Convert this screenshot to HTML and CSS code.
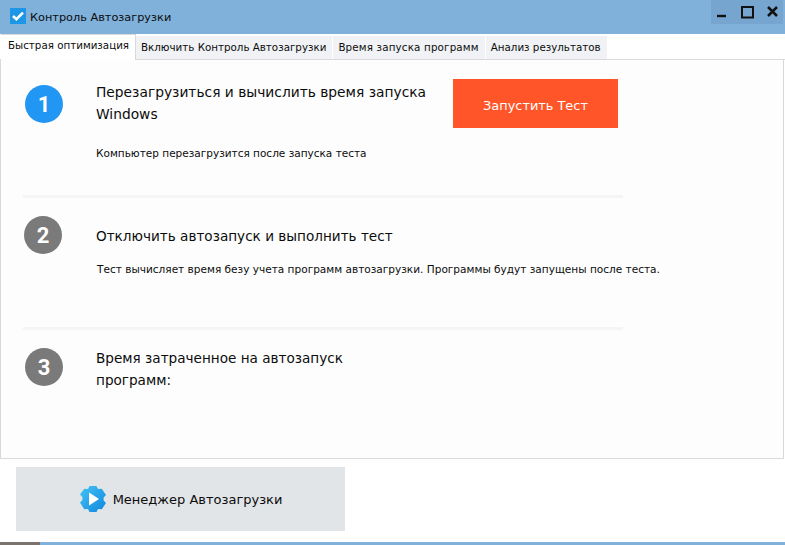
FILE: index.html
```html
<!DOCTYPE html>
<html lang="ru">
<head>
<meta charset="utf-8">
<title>Контроль Автозагрузки</title>
<link rel="stylesheet" href="styles.css">
</head>
<body>
<div class="window">
  <header class="titlebar">
    <svg class="app-icon" width="16" height="16" viewBox="0 0 16 16"><rect width="16" height="16" fill="#1e96e8"/><path d="M3 8l3.400 3.200L13 4.600" fill="none" stroke="#fff" stroke-width="2.600"/></svg>
    <span class="app-title">Контроль Автозагрузки</span>
    <div class="controls">
      <svg width="54" height="24" viewBox="0 0 54 24"><path d="M6 16h9" stroke="#111" stroke-width="2.400"/><rect x="31" y="7" width="11" height="10.500" fill="none" stroke="#111" stroke-width="2"/></svg>
      <svg class="close-icon" width="11" height="11" viewBox="0 0 11 11"><path d="M1 1l9 9M10 1l-9 9" stroke="#111" stroke-width="2.500"/></svg>
    </div>
  </header>
  <nav class="tabs">
    <div class="tab active">Быстрая оптимизация</div>
    <div class="tab">Включить Контроль Автозагрузки</div>
    <div class="tab tab-wide">Время запуска программ</div>
    <div class="tab">Анализ результатов</div>
  </nav>
  <main class="panel">
    <section class="step step-one">
      <div class="badge badge-blue badge-a">1</div>
      <div class="step-body">
        <div class="step-head">
          <h2 class="heading heading-narrow">Перезагрузиться и вычислить время запуска Windows</h2>
          <button class="run">Запустить Тест</button>
        </div>
        <p class="note">Компьютер перезагрузится после запуска теста</p>
      </div>
    </section>
    <hr class="rule">
    <section class="step step-two">
      <div class="badge badge-b">2</div>
      <div class="step-body">
        <h2 class="heading">Отключить автозапуск и выполнить тест</h2>
        <p class="note note-two">Тест вычисляет время безу учета программ автозагрузки. Программы будут запущены после теста.</p>
      </div>
    </section>
    <hr class="rule">
    <section class="step step-three">
      <div class="badge badge-a">3</div>
      <div class="step-body">
        <h2 class="heading heading-three">Время затраченное на автозапуск программ:</h2>
      </div>
    </section>
  </main>
  <footer class="footer">
    <button class="manager">
      <svg width="28" height="28" viewBox="0 0 28 28"><defs><linearGradient id="g" x1="0" y1="0" x2="1" y2="1"><stop offset="0" stop-color="#45c4f5"/><stop offset="1" stop-color="#0f86dd"/></linearGradient></defs><path d="M10.500 1h7l1.500 3 3.800-.3 4.200 6.300-2.400 2.500v3l2.400 2.500-4.200 6.300-3.800-.3-1.500 3h-7l-1.500-3-3.800.3L1 17.500 3.400 15v-3L1 9.500l4.200-5.800 3.800.3z" fill="url(#g)"/><path d="M10 7.500l10 6.500-10 6.500z" fill="#fff"/></svg>
      <span>Менеджер Автозагрузки</span>
    </button>
  </footer>
  <div class="taskstrip"><span class="strip-dark"></span><span class="strip-blue"></span></div>
</div>
</body>
</html>
```
FILE: styles.css
```css
* { box-sizing: border-box; }
html, body { margin: 0; padding: 0; }
body { width: 785px; height: 545px; overflow: hidden; background: #fff; font-family: "DejaVu Sans", sans-serif; color: #0c0c0c; }
.window { display: flex; flex-direction: column; width: 785px; height: 545px; }
.titlebar { display: flex; align-items: center; height: 34px; background: #80b1db; padding-left: 10px; flex: none; }
.app-icon { flex: none; margin-top: -2px; }
.app-title { margin-left: 4px; font-size: 11.300px; line-height: 34px; margin-top: 1px; }
.controls { display: flex; align-items: center; margin-left: auto; margin-right: 2px; width: 72px; height: 24px; align-self: flex-start; background: #76a6d0; }
.close-icon { margin-left: 2px; margin-top: -1px; }
.tabs { display: flex; height: 26px; flex: none; align-items: flex-end; padding-left: 1px; border-bottom: 1px solid #d9d9d9; }
.tab { height: 23px; padding: 0 6px 0 5px; margin-right: 1px; font-size: 10.300px; line-height: 22px; background: #f0f2f5; white-space: nowrap; }
.tab-wide { letter-spacing: .17px; }
.tab.active { height: 26px; width: 135px; background: #fff; line-height: 21px; padding: 0 0 0 7px; margin-right: 0; margin-bottom: -1px; border: 1px solid #d9d9d9; border-bottom: 0; border-left: 0; }
.panel { height: 399px; flex: none; margin-right: 1px; border-left: 1px solid #d9d9d9; border-right: 1px solid #d9d9d9; border-bottom: 1px solid #d9d9d9; background: #fdfdfd; padding-left: 22px; }
.step { display: flex; width: 600px; }
.step-one { height: 135px; padding-top: 19px; }
.step-two { height: 129px; padding-top: 18px; }
.step-three { padding-top: 18px; }
.badge { width: 38px; height: 38px; border-radius: 50%; background: #7a7a7a; color: #fff; display: flex; align-items: center; justify-content: center; font-family: Roboto, sans-serif; font-weight: 700; font-size: 22px; flex: none; }
.badge-blue { background: #2196f3; margin-top: 6px; }
.badge-a { margin-left: 2px; }
.badge-b { margin-left: 1px; }
.step-body { flex: 1; margin-left: 33px; min-width: 0; }
.badge-b + .step-body { margin-left: 34px; }
.step-head { display: flex; align-items: flex-start; }
.heading { margin: 0; font-size: 13.600px; font-weight: 400; line-height: 22px; }
.heading-narrow { width: 357px; padding-top: 2px; flex: none; font-size: 13.800px; }
.step-two .heading { padding-top: 9px; }
.heading-three { width: 290px; margin-top: -1px; }
.run { width: 165px; height: 49px; border: 0; padding: 3px 0 0; background: #ff5528; color: #fff; font: inherit; font-size: 12.900px; flex: none; }
.note { margin: 0; font-size: 10.500px; line-height: 16px; white-space: nowrap; padding-top: 17px; }
.note-two { margin-left: 1px; padding-top: 14px; font-size: 10.540px; }
.rule { margin: 0; height: 3px; width: 600px; border: 0; background: #f5f5f5; }
.footer { flex: 1; padding: 8px 0 0 16px; min-height: 0; }
.manager { display: flex; align-items: center; justify-content: center; gap: 6px; width: 329px; height: 64px; border: 0; background: #e1e5e8; color: #0c0c0c; font: inherit; font-size: 13px; }
.taskstrip { display: flex; height: 3px; flex: none; }
.strip-dark { width: 40px; background: #7b736e; }
.strip-blue { flex: 1; background: #80b1db; }
```
